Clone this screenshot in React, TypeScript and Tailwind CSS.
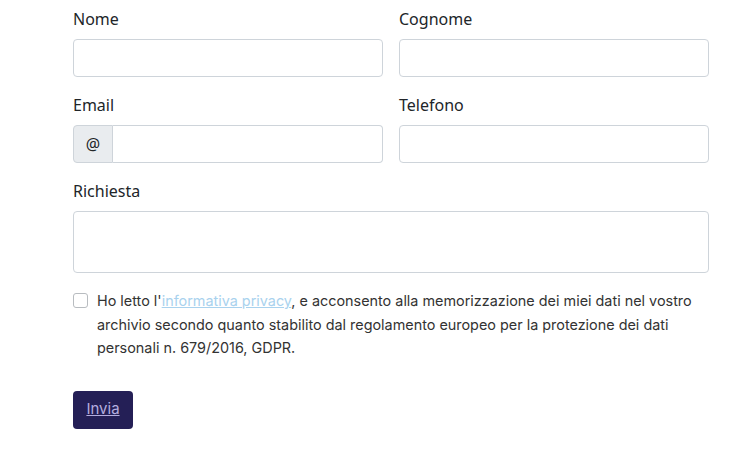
import React from "react";

const labelCls = "block mb-2 text-[16px] leading-6 text-[#212529]";
const inputCls =
  "block w-full h-[38px] rounded-[4px] border border-[#ced4da] bg-white px-3 outline-none";

function Field({ label, children }: { label: string; children: React.ReactNode }) {
  return (
    <div>
      <label className={labelCls}>{label}</label>
      {children}
    </div>
  );
}

export default function App() {
  return (
    <div className="min-h-[457px] bg-white font-['Noto_Sans',sans-serif]">
      <form className="ml-[73px] w-[636px] pt-[7px]">
        {/* ── Name row ── */}
        <div className="grid grid-cols-2 gap-x-4">
          <Field label="Nome">
            <input className={inputCls} />
          </Field>
          <Field label="Cognome">
            <input className={inputCls} />
          </Field>
        </div>

        {/* ── Contacts row ── */}
        <div className="mt-4 grid grid-cols-2 gap-x-4">
          <Field label="Email">
            <div className="flex h-[38px]">
              <span className="flex w-10 items-center justify-center rounded-l-[4px] border border-[#ced4da] bg-[#e9ecef] text-[16px] text-[#212529]">
                @
              </span>
              <input className="h-full min-w-0 flex-1 rounded-r-[4px] border border-l-0 border-[#ced4da] bg-white px-3 outline-none" />
            </div>
          </Field>
          <Field label="Telefono">
            <input className={inputCls} />
          </Field>
        </div>

        {/* ── Request ── */}
        <div className="mt-4">
          <Field label="Richiesta">
            <textarea className="block h-[62px] w-full resize-none rounded-[4px] border border-[#ced4da] bg-white px-3 py-2 outline-none" />
          </Field>
        </div>

        {/* ── Privacy ── */}
        <div className="mt-[16px] flex items-start gap-[9px] font-['Inter',sans-serif] text-[14.4px] leading-[23.5px] text-[#333]">
          <span className="mt-[4px] block h-[15px] w-[15px] shrink-0 rounded-[3px] border border-[#b8bcc0] bg-white" />
          <p className="w-[604px]">
            Ho letto l'
            <a href="#" className="text-[#a9d2ee] underline">
              informativa privacy
            </a>
            , e acconsento alla memorizzazione dei miei dati nel vostro archivio secondo quanto
            stabilito dal regolamento europeo per la protezione dei dati personali n. 679/2016,
            GDPR.
          </p>
        </div>

        <button
          type="button"
          className="mt-[31px] h-[38px] w-[60px] rounded-[4px] bg-[#241f56] font-['Inter',sans-serif] text-[15px] text-[#b4addf] underline"
        >
          Invia
        </button>
      </form>
    </div>
  );
}
